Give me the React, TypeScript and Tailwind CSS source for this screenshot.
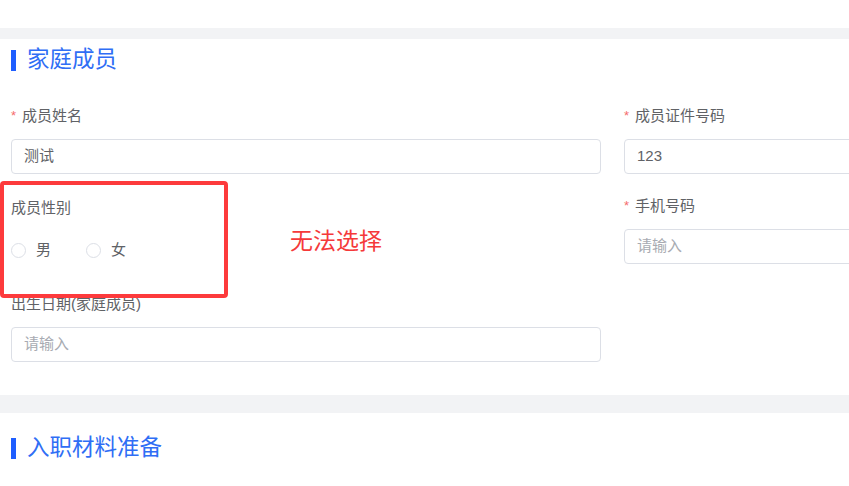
import React from 'react';

const font = "font-['Liberation_Sans','Noto_Sans_CJK_SC',sans-serif]";

function SectionTitle({ title }: { title: string }) {
  return (
    <div className="flex items-center h-[22px] px-[11px]">
      <span className="w-[5px] h-[21px] bg-[#1f5eff]" />
      <span className="ml-[11px] text-[22.5px] leading-[22px] text-[#2f6ef5]">{title}</span>
    </div>
  );
}

function Label({ text, required }: { text: string; required?: boolean }) {
  return (
    <div className="h-[22px] leading-[22px] text-[15px] text-[#606266] flex items-center">
      {required && <span className="text-[#f56c6c] mr-[6px] text-[13px]">*</span>}
      {text}
    </div>
  );
}

function Input({ value, placeholder }: { value?: string; placeholder?: string }) {
  return (
    <div className="mt-[12px] h-[35px] border border-[#dcdfe6] rounded-[4px] px-[12px] flex items-center text-[15px]">
      {value ? (
        <span className="text-[#606266]">{value}</span>
      ) : (
        <span className="text-[#a8abb2]">{placeholder}</span>
      )}
    </div>
  );
}

function Radio({ label }: { label: string }) {
  return (
    <label className="flex items-center mr-[35px]">
      <span className="w-[15px] h-[15px] rounded-full border border-[#dcdfe6] bg-white" />
      <span className="ml-[10px] text-[15px] text-[#606266]">{label}</span>
    </label>
  );
}

export default function App() {
  return (
    <div className={`w-[849px] h-[486px] overflow-hidden bg-white relative ${font}`}>
      <div className="h-[28px]" />
      <div className="h-[11px] bg-[#f2f3f5]" />

      {/* 家庭成员 */}
      <div className="pt-[10px]">
        <SectionTitle title="家庭成员" />

        <div className="mt-[34px] px-[11px] grid grid-cols-[590px_590px] gap-x-[23px] w-[1250px]">
          <div className="mb-[21px]">
            <Label text="成员姓名" required />
            <Input value="测试" />
          </div>
          <div className="mb-[21px]">
            <Label text="成员证件号码" required />
            <Input value="123" />
          </div>

          <div className="mb-[29px] relative">
            <div className="pt-[2px]">
              <Label text="成员性别" />
            </div>
            <div className="mt-[20px] flex items-center h-[22px]">
              <Radio label="男" />
              <Radio label="女" />
            </div>
            <span className="absolute left-[279px] top-[33px] text-[23px] leading-[26px] text-[#f5393a]">
              无法选择
            </span>
          </div>
          <div className="mb-[29px]">
            <Label text="手机号码" required />
            <Input placeholder="请输入" />
          </div>

          <div>
            <Label text="出生日期(家庭成员)" />
            <Input placeholder="请输入" />
          </div>
          <div />
        </div>
      </div>

      <div className="mt-[33px] h-[18px] bg-[#f2f3f5]" />

      {/* 入职材料准备 */}
      <div className="pt-[24px]">
        <SectionTitle title="入职材料准备" />
      </div>

      {/* annotation box */}
      <div className="absolute left-0 top-[181px] w-[228px] h-[117px] border-[4px] border-[#fd3a3c] rounded-[4px]" />
    </div>
  );
}
